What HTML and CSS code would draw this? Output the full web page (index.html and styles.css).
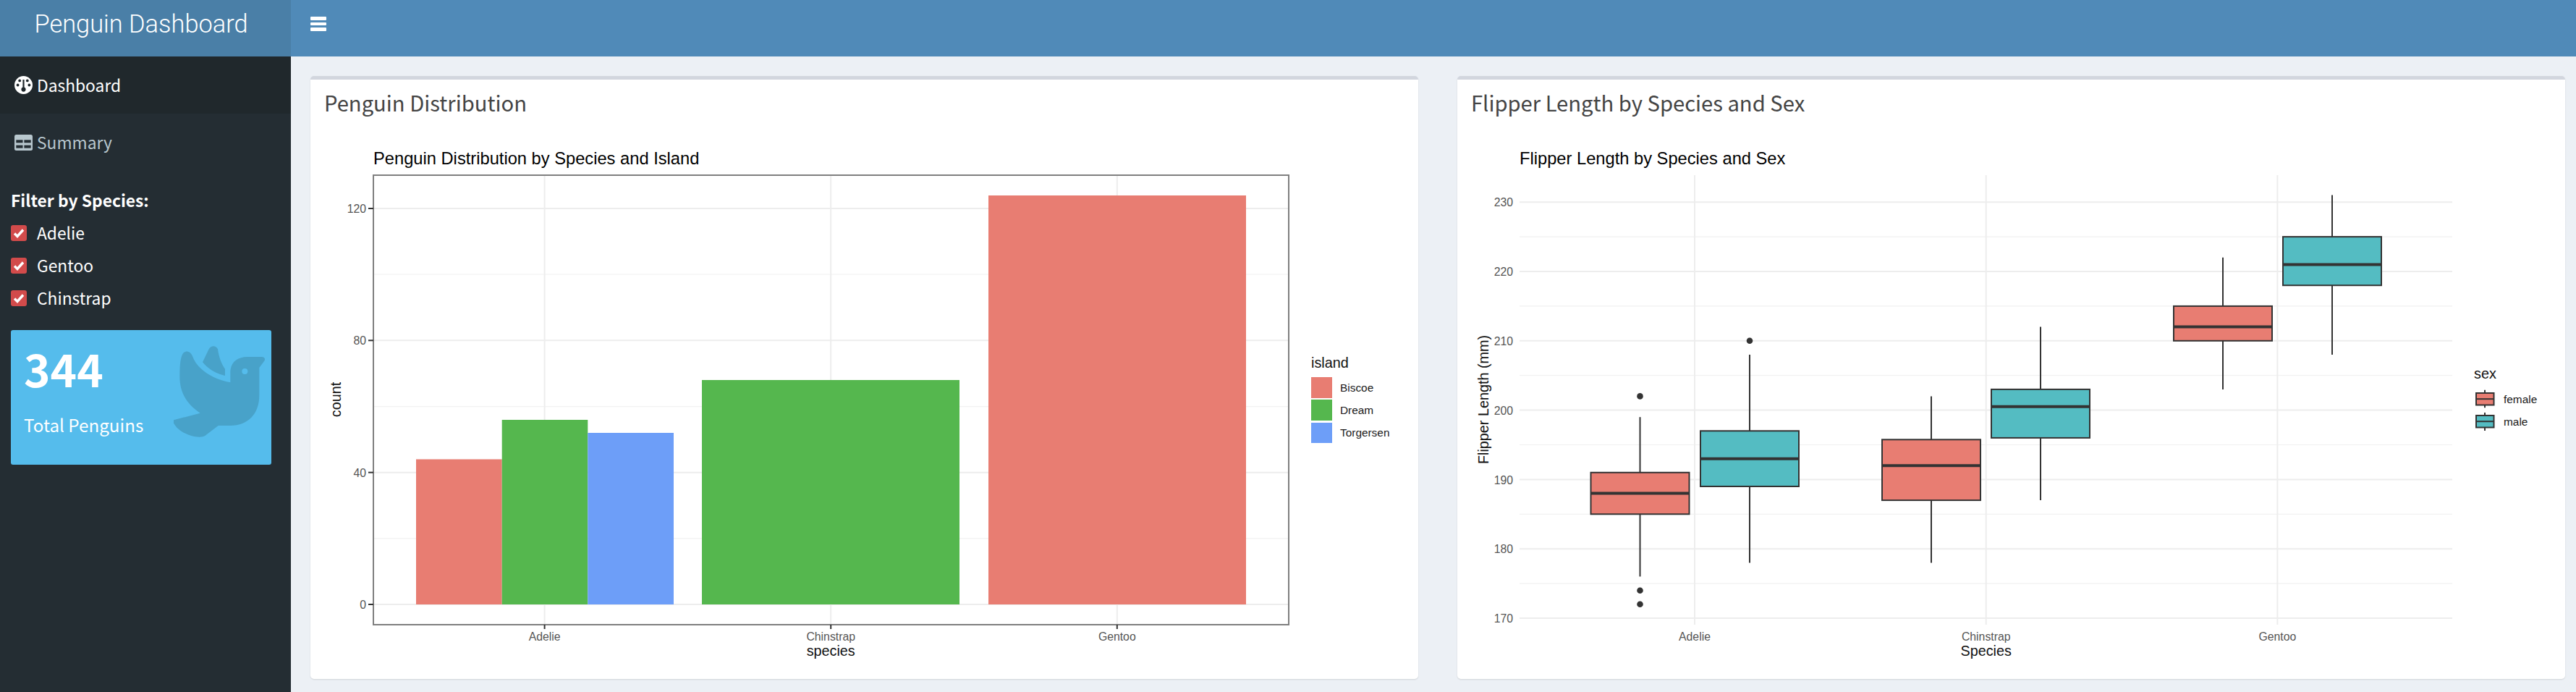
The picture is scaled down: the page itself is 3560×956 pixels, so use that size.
FILE: index.html
```html
<!DOCTYPE html>
<html lang="en">
<head>
  <meta charset="UTF-8">
  <title>Penguin Dashboard</title>
  <link rel="stylesheet" href="styles.css">
</head>
<body>
<div class="wrapper">

  <div class="logo">Penguin Dashboard</div>

  <header class="navbar">
    <div class="toggle"><span></span><span></span><span></span></div>
  </header>

  <aside class="sidebar">
    <a class="menu-item active">
      <svg class="menu-icon" viewBox="0 0 25 25">
        <circle cx="12.5" cy="12.5" r="12.5" fill="#fff"/>
        <g class="gauge-marks">
          <circle cx="4.6" cy="12.5" r="1.9"/>
          <circle cx="7.2" cy="6.4" r="1.9"/>
          <circle cx="17.8" cy="6.4" r="1.9"/>
          <circle cx="20.4" cy="12.5" r="1.9"/>
          <rect x="11.4" y="5" width="2.2" height="13"/>
          <circle cx="12.5" cy="18.6" r="3.1"/>
        </g>
      </svg>
      Dashboard
    </a>
    <a class="menu-item">
      <svg class="menu-icon table-icon" viewBox="0 0 25 22">
        <rect width="25" height="22" rx="2.5" fill="#b8c7ce"/>
        <g class="table-cells">
          <rect x="2.3" y="7.3" width="9.2" height="4"/>
          <rect x="13.4" y="7.3" width="9.3" height="4"/>
          <rect x="2.3" y="14.6" width="9.2" height="4"/>
          <rect x="13.4" y="14.6" width="9.3" height="4"/>
        </g>
      </svg>
      Summary
    </a>

    <div class="filter">
      <div class="filter-label">Filter by Species:</div>
      <label class="check-row">
        <span class="check"><svg viewBox="0 0 22 22"><path d="M5 11.5l4 4 8-9"/></svg></span>
        Adelie
      </label>
      <label class="check-row">
        <span class="check"><svg viewBox="0 0 22 22"><path d="M5 11.5l4 4 8-9"/></svg></span>
        Gentoo
      </label>
      <label class="check-row">
        <span class="check"><svg viewBox="0 0 22 22"><path d="M5 11.5l4 4 8-9"/></svg></span>
        Chinstrap
      </label>
    </div>

    <div class="value-box">
      <div class="value">344</div>
      <div class="value-label">Total Penguins</div>
      <svg class="value-icon" viewBox="720 655 378 378">
        <path fill-rule="evenodd" d="M720 962 L830 933 C775 895 745 850 745 780 C745 735 748 695 762 682 C775 672 790 678 797 695 C815 750 880 792 955 806 L955 760 C957 722 985 700 1025 700 L1085 700 C1097 700 1102 710 1095 718 L1075 745 L1075 860 C1075 935 1030 985 955 985 L905 985 L850 1027 C840 1033 825 1033 805 1030 C765 1022 735 1000 722 978 C717 970 716 965 720 962 Z M1015 748 A12 12 0 1 0 1015 772 A12 12 0 1 0 1015 748 Z"/>
        <path d="M840 722 L866 668 C875 652 895 652 903 668 C907 700 918 730 933 750 L933 778 C890 768 862 748 840 722 Z"/>
      </svg>
    </div>
  </aside>

  <main class="content">

    <section class="box">
      <h3 class="box-title">Penguin Distribution</h3>
      <svg class="plot" viewBox="429 180 1531 758">
        <text class="plot-title" x="516" y="227">Penguin Distribution by Species and Island</text>

        <!-- grid -->
        <g class="grid-minor">
          <line x1="516" x2="1781" y1="379" y2="379"/>
          <line x1="516" x2="1781" y1="561.6" y2="561.6"/>
          <line x1="516" x2="1781" y1="743.8" y2="743.8"/>
        </g>
        <g class="grid-major">
          <line x1="516" x2="1781" y1="288" y2="288"/>
          <line x1="516" x2="1781" y1="470.3" y2="470.3"/>
          <line x1="516" x2="1781" y1="652.7" y2="652.7"/>
          <line x1="516" x2="1781" y1="835" y2="835"/>
          <line x1="752.6" x2="752.6" y1="242" y2="863"/>
          <line x1="1148.2" x2="1148.2" y1="242" y2="863"/>
          <line x1="1543.8" x2="1543.8" y1="242" y2="863"/>
        </g>

        <!-- bars -->
        <rect class="fill-biscoe" x="575" y="634.5" width="118.7" height="200.5"/>
        <rect class="fill-dream" x="693.7" y="580" width="118.6" height="255"/>
        <rect class="fill-torgersen" x="812.3" y="598" width="118.7" height="237"/>
        <rect class="fill-dream" x="970" y="525" width="356" height="310"/>
        <rect class="fill-biscoe" x="1366" y="270" width="356" height="565"/>

        <rect class="panel-border" x="516" y="242" width="1265" height="621"/>

        <!-- axes -->
        <g class="tick">
          <line x1="509" x2="516" y1="288" y2="288"/>
          <line x1="509" x2="516" y1="470.3" y2="470.3"/>
          <line x1="509" x2="516" y1="652.7" y2="652.7"/>
          <line x1="509" x2="516" y1="835" y2="835"/>
          <line x1="752.6" x2="752.6" y1="863" y2="869"/>
          <line x1="1148.2" x2="1148.2" y1="863" y2="869"/>
          <line x1="1543.8" x2="1543.8" y1="863" y2="869"/>
        </g>
        <g class="tick-label anchor-end">
          <text x="506" y="294">120</text>
          <text x="506" y="476">80</text>
          <text x="506" y="659">40</text>
          <text x="506" y="841">0</text>
        </g>
        <g class="tick-label anchor-middle">
          <text x="752.6" y="885">Adelie</text>
          <text x="1148.2" y="885">Chinstrap</text>
          <text x="1543.8" y="885">Gentoo</text>
        </g>
        <text class="axis-title anchor-middle" x="1148.2" y="906">species</text>
        <text class="axis-title anchor-middle" transform="translate(471 552) rotate(-90)">count</text>

        <!-- legend -->
        <text class="axis-title" x="1812" y="508">island</text>
        <rect class="fill-biscoe" x="1812" y="521" width="29" height="29"/>
        <rect class="fill-dream" x="1812" y="552" width="29" height="29"/>
        <rect class="fill-torgersen" x="1812" y="584" width="29" height="28"/>
        <g class="legend-label">
          <text x="1852" y="541">Biscoe</text>
          <text x="1852" y="572">Dream</text>
          <text x="1852" y="603">Torgersen</text>
        </g>
      </svg>
    </section>

    <section class="box">
      <h3 class="box-title">Flipper Length by Species and Sex</h3>
      <svg class="plot" viewBox="2014 180 1531 758">
        <text class="plot-title" x="2100" y="227">Flipper Length by Species and Sex</text>

        <!-- grid -->
        <g class="grid-minor">
          <line x1="2100" x2="3389" y1="327.1" y2="327.1"/>
          <line x1="2100" x2="3389" y1="422.9" y2="422.9"/>
          <line x1="2100" x2="3389" y1="518.7" y2="518.7"/>
          <line x1="2100" x2="3389" y1="614.5" y2="614.5"/>
          <line x1="2100" x2="3389" y1="710.3" y2="710.3"/>
          <line x1="2100" x2="3389" y1="806.1" y2="806.1"/>
        </g>
        <g class="grid-major">
          <line x1="2100" x2="3389" y1="279.2" y2="279.2"/>
          <line x1="2100" x2="3389" y1="375" y2="375"/>
          <line x1="2100" x2="3389" y1="470.8" y2="470.8"/>
          <line x1="2100" x2="3389" y1="566.6" y2="566.6"/>
          <line x1="2100" x2="3389" y1="662.4" y2="662.4"/>
          <line x1="2100" x2="3389" y1="758.2" y2="758.2"/>
          <line x1="2100" x2="3389" y1="854" y2="854"/>
          <line x1="2342" x2="2342" y1="242" y2="863"/>
          <line x1="2744.7" x2="2744.7" y1="242" y2="863"/>
          <line x1="3147.4" x2="3147.4" y1="242" y2="863"/>
        </g>

        <!-- whiskers -->
        <g class="whisker">
          <line x1="2266.5" x2="2266.5" y1="576.2" y2="796.5"/>
          <line x1="2418" x2="2418" y1="490" y2="777.4"/>
          <line x1="2669" x2="2669" y1="547.4" y2="777.4"/>
          <line x1="2820" x2="2820" y1="451.6" y2="691.1"/>
          <line x1="3072" x2="3072" y1="355.8" y2="537.9"/>
          <line x1="3223" x2="3223" y1="269.6" y2="490"/>
        </g>

        <!-- boxes -->
        <rect class="box-female" x="2198.5" y="652.8" width="136" height="57.5"/>
        <rect class="box-male" x="2350" y="595.3" width="136" height="76.7"/>
        <rect class="box-female" x="2601" y="607.3" width="136" height="83.8"/>
        <rect class="box-male" x="2752" y="537.9" width="136" height="67"/>
        <rect class="box-female" x="3004" y="422.9" width="136" height="47.9"/>
        <rect class="box-male" x="3155" y="327.1" width="136" height="67.1"/>

        <g class="median">
          <line x1="2198.5" x2="2334.5" y1="681.6" y2="681.6"/>
          <line x1="2350" x2="2486" y1="633.7" y2="633.7"/>
          <line x1="2601" x2="2737" y1="643.2" y2="643.2"/>
          <line x1="2752" x2="2888" y1="561.8" y2="561.8"/>
          <line x1="3004" x2="3140" y1="451.6" y2="451.6"/>
          <line x1="3155" x2="3291" y1="365.4" y2="365.4"/>
        </g>

        <g class="outlier">
          <circle cx="2266.5" cy="547.4" r="4.3"/>
          <circle cx="2266.5" cy="815.7" r="4.3"/>
          <circle cx="2266.5" cy="834.8" r="4.3"/>
          <circle cx="2418" cy="470.8" r="4.3"/>
        </g>

        <!-- axes -->
        <g class="tick-label anchor-end">
          <text x="2091" y="285">230</text>
          <text x="2091" y="381">220</text>
          <text x="2091" y="477">210</text>
          <text x="2091" y="573">200</text>
          <text x="2091" y="669">190</text>
          <text x="2091" y="764">180</text>
          <text x="2091" y="860">170</text>
        </g>
        <g class="tick-label anchor-middle">
          <text x="2342" y="885">Adelie</text>
          <text x="2744.7" y="885">Chinstrap</text>
          <text x="3147.4" y="885">Gentoo</text>
        </g>
        <text class="axis-title anchor-middle" x="2744.7" y="906">Species</text>
        <text class="axis-title anchor-middle" transform="translate(2057 552) rotate(-90)">Flipper Length (mm)</text>

        <!-- legend -->
        <text class="axis-title" x="3419" y="523">sex</text>
        <g class="whisker">
          <line x1="3434" x2="3434" y1="538.7" y2="563.3"/>
          <line x1="3434" x2="3434" y1="570" y2="595"/>
        </g>
        <rect class="box-female" x="3422" y="543" width="24.5" height="16.5"/>
        <rect class="box-male" x="3422" y="574" width="24.5" height="16.5"/>
        <g class="whisker">
          <line x1="3422" x2="3446.5" y1="551.2" y2="551.2"/>
          <line x1="3422" x2="3446.5" y1="582.2" y2="582.2"/>
        </g>
        <g class="legend-label">
          <text x="3460" y="557">female</text>
          <text x="3460" y="588">male</text>
        </g>
      </svg>
    </section>

  </main>
</div>
</body>
</html>
```

FILE: styles.css
```css
* {
  box-sizing: border-box;
}

body {
  margin: 0;
  background: #ecf0f5;
  font-family: "Noto Sans CJK SC", "Noto Sans", sans-serif;
  color: #444;
}

.wrapper {
  display: grid;
  grid-template-columns: 402px 1fr;
  grid-template-rows: 78px 1fr;
  height: 100vh;
  overflow: hidden;
}

/* header */
.logo {
  background: #4a7fa7;
  color: #fff;
  font-family: Roboto, "Liberation Sans", sans-serif;
  font-weight: 300;
  font-size: 34.4px;
  line-height: 66px;
  padding-right: 12px;
  text-align: center;
}

.navbar {
  background: #508ab8;
  padding: 23px 0 0 27px;
}

.toggle {
  width: 22px;
  display: flex;
  flex-direction: column;
  gap: 3px;
}

.toggle span {
  height: 4.5px;
  border-radius: 1px;
  background: #fff;
}

/* sidebar */
.sidebar {
  background: #242d33;
}

.menu-item {
  display: flex;
  align-items: center;
  gap: 6px;
  height: 79px;
  padding-left: 20px;
  color: #b8c7ce;
  font-size: 22.8px;
}

.menu-item.active {
  background: #20282c;
  color: #fff;
}

.menu-icon {
  width: 25px;
  height: 25px;
  flex: none;
}

.table-icon {
  height: 22px;
}

.gauge-marks {
  fill: #20282c;
}

.table-cells {
  fill: #242d33;
}

.filter {
  padding: 28px 15px 0 15px;
  color: #fff;
}

.filter-label {
  font-size: 22.8px;
  font-weight: 700;
  line-height: 26px;
  margin-bottom: 9px;
}

.check-row {
  display: flex;
  align-items: center;
  height: 45px;
  font-size: 22.8px;
}

.check {
  width: 22px;
  height: 22px;
  margin-right: 14px;
  border-radius: 3px;
  background: #d24b4b;
}

.check svg {
  display: block;
  fill: none;
  stroke: #fff;
  stroke-width: 3.4;
}

.value-box {
  position: relative;
  width: 360px;
  height: 186px;
  margin: 22px 0 0 15px;
  padding: 14px 18px;
  border-radius: 3px;
  background: #55bcec;
  color: #fff;
}

.value {
  font-size: 62px;
  font-weight: 700;
  line-height: 76px;
}

.value-label {
  margin-top: 24px;
  font-size: 24.2px;
  line-height: 34px;
}

.value-icon {
  position: absolute;
  top: 22px;
  right: 9px;
  width: 126px;
  height: 126px;
  fill: #48a2c9;
}

/* content */
.content {
  display: flex;
  gap: 54px;
  padding: 27px 15px 18px 27px;
  min-width: 0;
}

.box {
  flex: 1;
  min-width: 0;
  background: #fff;
  border-top: 5px solid #d2d6de;
  border-radius: 5px;
  box-shadow: 0 1px 2px rgba(0, 0, 0, 0.12);
}

.box-title {
  margin: 0;
  padding-left: 19px;
  height: 70px;
  font-size: 29.2px;
  font-weight: 400;
  line-height: 62px;
}

.plot {
  display: block;
  width: 100%;
  height: 758px;
}

/* plot parts */
.plot text {
  font-family: "Liberation Sans", Arial, sans-serif;
}

.plot-title {
  font-size: 23.7px;
  fill: #000;
}

.axis-title {
  font-size: 19.8px;
  fill: #111;
}

.tick-label {
  font-size: 15.8px;
  fill: #555;
}

.legend-label {
  font-size: 15.4px;
  fill: #1a1a1a;
}

.anchor-end {
  text-anchor: end;
}

.anchor-middle {
  text-anchor: middle;
}

.grid-major {
  stroke: #ededed;
  stroke-width: 2;
}

.grid-minor {
  stroke: #f1f1f1;
  stroke-width: 1.2;
}

.panel-border {
  fill: none;
  stroke: #7f7f7f;
  stroke-width: 2;
}

.tick {
  stroke: #333;
  stroke-width: 2;
}

.fill-biscoe {
  fill: #e87d72;
}

.fill-dream {
  fill: #55b74e;
}

.fill-torgersen {
  fill: #6d9ef8;
}

.box-female,
.box-male {
  stroke: #333;
  stroke-width: 2;
}

.box-female {
  fill: #e87d72;
}

.box-male {
  fill: #54bcc2;
}

.whisker {
  stroke: #333;
  stroke-width: 2;
}

.median {
  stroke: #333;
  stroke-width: 4;
}

.outlier {
  fill: #333;
}
```
